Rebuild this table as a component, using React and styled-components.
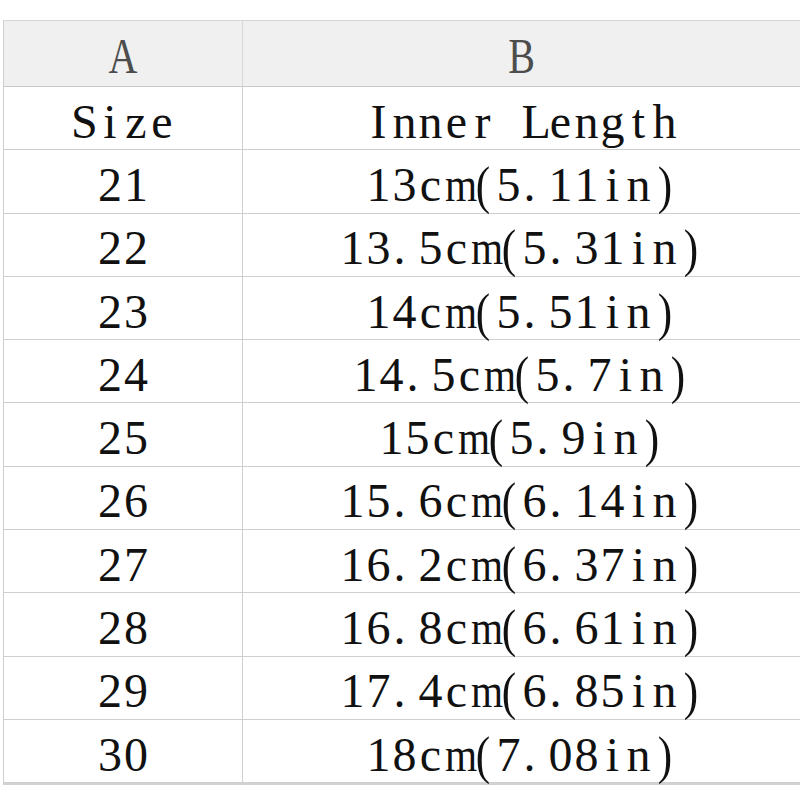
import styled, { createGlobalStyle } from "styled-components";

const GlobalStyle = createGlobalStyle`
	html, body {
		margin: 0;
		padding: 0;
		background: #ffffff;
	}
`;

const rows = [
	["Size", "Inner Length"],
	["21", "13cm(5.11in)"],
	["22", "13.5cm(5.31in)"],
	["23", "14cm(5.51in)"],
	["24", "14.5cm(5.7in)"],
	["25", "15cm(5.9in)"],
	["26", "15.6cm(6.14in)"],
	["27", "16.2cm(6.37in)"],
	["28", "16.8cm(6.61in)"],
	["29", "17.4cm(6.85in)"],
	["30", "18cm(7.08in)"]
];

// half-width cells, like the mincho font of the sheet
function Text({ value }) {
	return value.split("").map((ch, i) => (
		<Char
			key={i}
			$wide={ch === "m"}
			$dot={ch === "."}
			$paren={ch === "(" || ch === ")"}
		>
			{ch === " " ? "\u00a0" : ch}
		</Char>
	));
}

export default function App() {
	return (
		<>
			<GlobalStyle />
			<Page>
				<Sheet>
					<HeadCell><HeadLabel>A</HeadLabel></HeadCell>
					<HeadCell><HeadLabel>B</HeadLabel></HeadCell>
					{rows.map(([size, length]) => [
						<Cell key={size}><Text value={size} /></Cell>,
						<Cell key={size + "b"}><Text value={length} /></Cell>
					])}
				</Sheet>
			</Page>
		</>
	);
}

const Page = styled.div`
	width: 800px;
	height: 800px;
	padding: 20px 0 0 3px;
	box-sizing: border-box;
	overflow: hidden;
`;

const Sheet = styled.div`
	display: grid;
	grid-template-columns: 239px 558px;
	grid-template-rows: 66px repeat(11, 63.3px);
	border-top: 1px solid #d6d6d6;
	border-left: 1px solid #cfcfcf;
	border-bottom: 2px solid #d2d2d2;
`;

const HeadCell = styled.div`
	display: flex;
	align-items: center;
	justify-content: center;
	background: #f0f0f0;
	border-bottom: 1px solid #c8c8c8;
	border-right: 1px solid #d8d8d8;
	box-sizing: border-box;
	padding-top: 4px;
`;

const HeadLabel = styled.span`
	display: inline-block;
	color: #4d4d4d;
	font-family: "Liberation Serif", serif;
	font-size: 50px;
	transform: scaleX(0.8);
`;

const Cell = styled.div`
	display: flex;
	align-items: center;
	justify-content: center;
	color: #111111;
	font-family: "Liberation Serif", serif;
	font-size: 48px;
	border-bottom: 1px solid #cfcfcf;
	border-right: 1px solid #cfcfcf;
	box-sizing: border-box;
	white-space: nowrap;
	padding-top: 6px;
`;

const Char = styled.span`
	display: inline-block;
	width: 26px;
	text-align: ${p => (p.$dot ? "left" : "center")};
	padding-left: ${p => (p.$dot ? "2px" : "0")};
	box-sizing: border-box;
	transform: ${p =>
		p.$wide ? "scaleX(0.86) translateX(-1px)" : p.$paren ? "scaleY(1.12) scaleX(0.9)" : "none"};
`;
